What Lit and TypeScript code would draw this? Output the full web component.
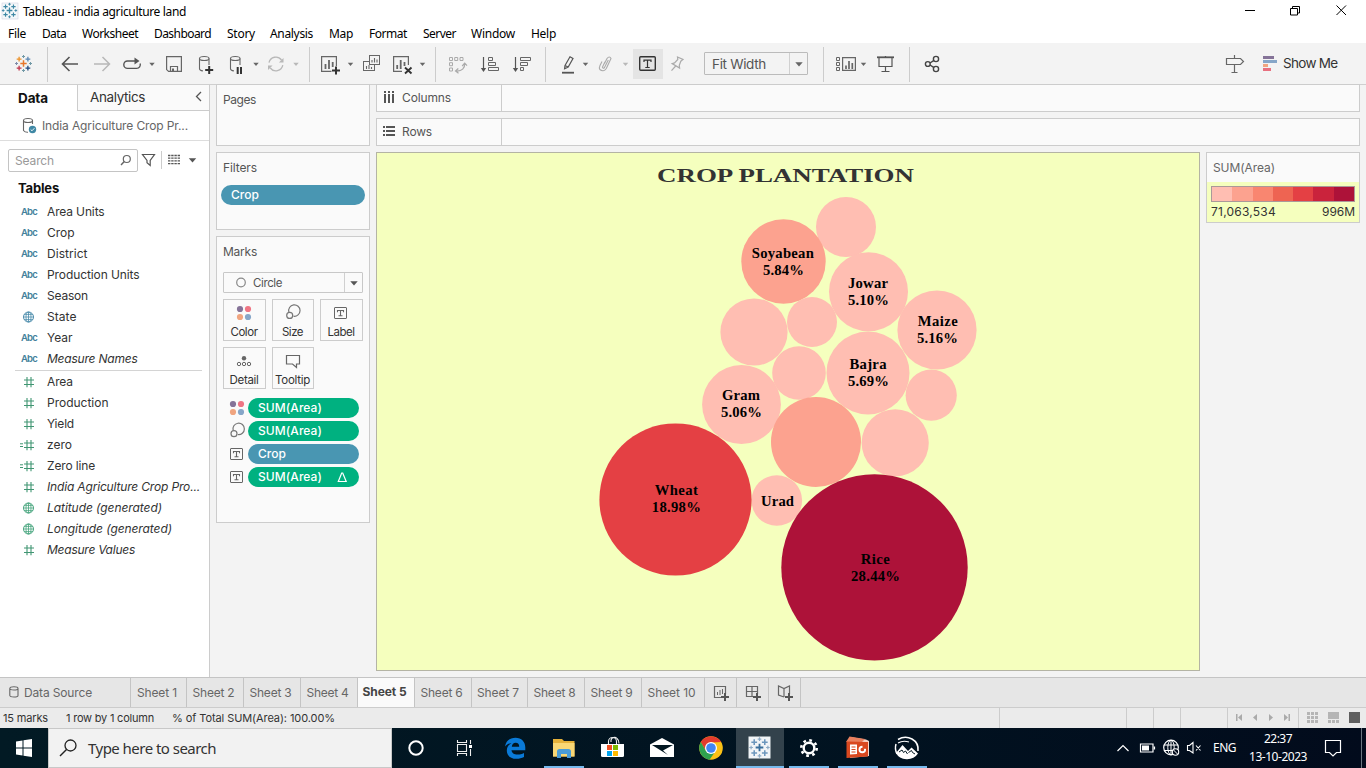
import { LitElement, html, svg, css } from "lit";
import { customElement, property } from "lit/decorators.js";

/** A single line of text tracked to an exact advance width. */
@customElement("fit-text")
class FitText extends LitElement {
  @property({ type: Number }) w = 0;
  @property() text = "";
  static styles = css`
    :host { display: inline-block; white-space: pre; flex: none; }
    .s { display: inline-block; }
  `;
  render() {
    return html`<span class="s">${this.text}</span>`;
  }
  firstUpdated() {
    const s = this.renderRoot.querySelector(".s") as HTMLElement;
    const natural = s.getBoundingClientRect().width;
    s.style.letterSpacing = `${(this.w - natural) / this.text.length}px`;
  }
}

const t = (text: string, w: number, cls = "") =>
  html`<fit-text class=${cls} .text=${text} .w=${w}></fit-text>`;

/** An icon cell: a window of the given size onto the shared drawing space. */
const cell = (x: number, y: number, w: number, h: number, body: unknown, cls = "") =>
  html`<svg class="cell ${cls}" width=${w} height=${h} viewBox="${x} ${y} ${w} ${h}">${body}</svg>`;

const L = (d: string, c = "#666", sw = 1.2) =>
  svg`<path d=${d} fill="none" stroke=${c} stroke-width=${sw} />`;
const F = (d: string, c = "#666") => svg`<path d=${d} fill=${c} />`;
const C = (cx: number, cy: number, r: number, c: string) =>
  svg`<circle cx=${cx} cy=${cy} r=${r} fill=${c} />`;
const O = (cx: number, cy: number, r: number, c = "#666", sw = 1.2, f = "none") =>
  svg`<circle cx=${cx} cy=${cy} r=${r} fill=${f} stroke=${c} stroke-width=${sw} />`;
const plus = (x: number, y: number, r: number, c: string, sw = 1.2) =>
  L(`M${x - r} ${y}H${x + r}M${x} ${y - r}V${y + r}`, c, sw);
const caret = (x: number, y: number, c = "#666", r = 2.7) =>
  F(`M${x - r} ${y - r / 2}H${x + r}L${x} ${y + r * 0.7}Z`, c);

const logo = (x: number, y: number, k: number, p: string[]) => svg`
  ${plus(x, y, 3.2 * k, p[0], 1.5 * k)}
  ${plus(x - 4.4 * k, y - 4.4 * k, 2.4 * k, p[1], 1.3 * k)}
  ${plus(x + 4.4 * k, y - 4.4 * k, 2.4 * k, p[2], 1.3 * k)}
  ${plus(x - 4.4 * k, y + 4.6 * k, 2.4 * k, p[3], 1.3 * k)}
  ${plus(x + 4.4 * k, y + 4.6 * k, 2.4 * k, p[4], 1.3 * k)}
  ${plus(x, y - 7 * k, 1.5 * k, p[5], k)}
  ${plus(x, y + 7 * k, 1.5 * k, p[5], k)}
  ${plus(x - 7 * k, y, 1.5 * k, p[6], k)}
  ${plus(x + 7 * k, y, 1.5 * k, p[5], k)}`;

const cylinder = (x: number, y: number, w: number) =>
  svg`<ellipse cx=${x + w / 2} cy=${y + 2} rx=${w / 2} ry="2" fill="none" stroke="#666" stroke-width="1.1" />`;

const sep = (x: number) => L(`M${x + 0.5} 47V82`, "#ccc", 1);
const T = (x: number, y: number, w: number, h: number) => svg`
  <rect x=${x + 0.5} y=${y + 0.5} width=${w - 1} height=${h - 1} rx=".5" fill="none" stroke="#666" />
  ${L(`M${x + w / 2} ${y + 3}V${y + h - 3}M${x + w / 2 - 2} ${y + h - 3.3}h4M${x + w / 2 - 3} ${y + 5.2}V${y + 3.5}h6v1.7`, "#666", 1.1)}`;
const lasso = (x: number, y: number) => svg`
  ${L(`M${x - 4.6} ${y + 0.2}A5.7 5.700 0 1 1 ${x} ${y + 4.2}`, "#777", 1.2)}${O(x - 3.8, y + 3.4, 3, "#777", 1.2)}`;
const dots = (x: number, y: number) => svg`
  ${C(x - 4, y - 4, 3.1, "#857398")}${C(x + 4, y - 4, 3.1, "#ef7584")}
  ${C(x - 4, y + 4, 3.1, "#f0a580")}${C(x + 4, y + 4, 3.1, "#86a6c8")}`;

const toolbarLeft = [
  cell(0, 43, 47, 41, logo(23.5, 63.5, 1, ["#e8762c", "#eb9129", "#5c87b2", "#c0334a", "#1f457e", "#7199a6", "#7f8ba8"])),
  cell(47, 43, 8, 41, sep(47)),
  cell(55, 43, 65, 41, svg`
    ${L("M62.5 64H78M69.5 57L62.5 64L69.5 71", "#555", 1.6)}
    ${L("M94 64H109M102.5 57L109.5 64L102.5 71", "#b8b8b8", 1.5)}`),
  cell(120, 43, 40, 41, svg`
    ${L("M137 61H127.5a3.7 3.7 0 0 0 0 7.4H136.5a3.7 3.7 0 0 0 3.6-5", "#555", 1.4)}
    ${F("M134.5 57.6L139.5 61L134.5 64.4Z", "#555")}${caret(152, 64)}`),
  cell(160, 43, 30, 41, svg`
    ${L("M166.6 56.6H181.4V71.4H168.6L166.6 69.6Z M170.5 71V66.5H177.5V71", "#666", 1.2)}${F("M172 68.5h2v3h-2z")}`),
  cell(190, 43, 30, 41, svg`${cylinder(199.5, 56.5, 9.5)}
    ${L("M199.5 58.5V68.7c0 1.4 1.6 2 3.4 2.2M209 58.5V65", "#666", 1.1)}${plus(209.2, 70, 4, "#333", 2)}`),
  cell(220, 43, 42, 41, svg`${cylinder(230.5, 56.5, 9.5)}
    ${L("M230.5 58.5V68.7c0 1.4 1.6 2 3.4 2.2M240 58.5V65", "#666", 1.1)}${L("M237.7 67V74M241 67V74", "#333", 2)}${caret(256, 64)}`),
  cell(262, 43, 47, 41, svg`
    ${L("M269 62.6A7 7 0 0 1 281.5 60M282.8 65.2A7 7 0 0 1 270.3 68", "#b8b8b8", 1.3)}
    ${F("M283.5 58v4.6h-4.6zM268 70v-4.6h4.6z", "#b8b8b8")}${caret(296, 64, "#b8b8b8")}`),
  cell(309, 43, 8, 41, sep(309)),
  cell(317, 43, 43, 41, svg`
    ${L("M331.5 71.4H321.6V56.6H336.4V66", "#666", 1.2)}${L("M325.5 69V64M329 69V60M332.7 67V62", "#666", 1.8)}
    ${plus(336, 70.4, 4, "#333", 2)}${caret(350.5, 64)}`),
  cell(360, 43, 27, 41, svg`
    <rect x="363.5" y="61.5" width="11" height="9" fill="#f3f3f3" stroke="#666" />
    <rect x="369.5" y="55.5" width="10" height="9" fill="#f3f3f3" stroke="#666" />
    ${L("M366.5 69V66M369 69V65M371.5 69V67M372 62.5V60M374.5 62.5V58M377 62.5V59.5", "#666", 1.1)}`),
  cell(387, 43, 48, 41, svg`
    ${L("M402 71.4H393.6V56.6H408.4V65", "#666", 1.2)}${L("M397.2 69V65M400.7 69V60M404.5 66V62", "#666", 1.8)}
    ${L("M405 67.5L411.5 73.5M411.5 67.5L405 73.5", "#333", 1.9)}${caret(422.5, 64)}`),
  cell(435, 43, 8, 41, sep(435)),
  cell(443, 43, 30, 41, svg`
    ${L("M449.5 57.5h3v3h-3zM454.7 57.5h3v3h-3zM460 57.5h3v3h-3zM449.5 62.7h3v3h-3zM449.5 68h3v3h-3z", "#aaa", 1)}
    ${L("M456 71C462 71.5 465 68 464.7 63.5M462.2 66L464.7 63.2L467 65.7M458.3 68.5L455.5 71L458.5 73.3", "#aaa", 1.2)}`),
  cell(473, 43, 32, 41, svg`
    ${L("M483.5 57V70", "#555", 1.2)}${F("M480.8 68H486.2L483.5 72Z", "#555")}
    ${L("M488.5 57.5h4v3h-4zM488.5 62.5h7v3h-7zM488.5 67.5h10v3h-10z", "#666", 1)}`),
  cell(505, 43, 40, 41, svg`
    ${L("M515.5 57V70", "#555", 1.2)}${F("M512.8 68H518.2L515.5 72Z", "#555")}
    ${L("M520.5 57.5h10v3h-10zM520.5 62.5h7v3h-7zM520.5 67.5h3v3h-3z", "#666", 1)}`),
  cell(545, 43, 8, 41, sep(545)),
  cell(553, 43, 40, 41, svg`
    ${L("M565 65.5L570 56.8L573 58.5L568.2 67L564.6 68.8ZM565 65.5L568.2 67", "#555", 1.2)}
    ${L("M562 72.7H574", "#555", 1.8)}${caret(585.5, 64)}`),
  cell(593, 43, 39, 41, svg`
    ${L("M604.5 63.5L607 58.5Q609.5 55.5 611 58.5L606.3 68.5Q603.5 72.5 599.8 69.5Q598.8 68 600 65.5L602 61.5M608.3 60L604.5 67.5Q603 69 602.4 67.2L605 61.8", "#aaa", 1.1)}
    ${caret(625.5, 64, "#b8b8b8")}`),
  cell(632, 43, 31, 41, svg`
    <rect x="633" y="49" width="30" height="30" fill="#e4e4e4" />
    <rect x="639.7" y="56.7" width="15.6" height="13.6" rx="1" fill="none" stroke="#333" stroke-width="1.4" />
    ${L("M647.5 60V67.3M645.3 67.5H649.7M644 62V60.2H651V62", "#333", 1.2)}`),
  cell(663, 43, 41, 41, svg`
    ${L("M677.5 57L683 59.5L680.8 61.2L679.3 65.3L679.6 68L672.2 63.6L674.5 62.9L677.8 59.5ZM675.7 66L671.5 70.7", "#aaa", 1.2)}`),
];

const toolbarRight = [
  cell(808, 43, 15, 41, ""),
  cell(823, 43, 8, 41, sep(823)),
  cell(831, 43, 38, 41, svg`
    ${L("M836.5 57.5h3v3h-3zM836.5 62.5h3v3h-3zM836.5 67.5h3v3h-3z", "#666", 1)}
    ${L("M842.6 57.6H855.4V70.4H842.6Z", "#666", 1.2)}${L("M846 69V65.5M849 69V61M852.3 69V63", "#666", 1.7)}${caret(863.5, 64)}`),
  cell(869, 43, 40, 41, svg`
    ${L("M877 57.3H894", "#555", 1.8)}${L("M879 58V66.5H892V58M885.5 56V57M885.5 66.5V71M881.5 71.5H889.5", "#555", 1.2)}`),
  cell(909, 43, 8, 41, sep(909)),
  cell(917, 43, 30, 41, svg`
    ${L("M930 63L934 60.3M930 65L934 67.7", "#444", 1.4)}${O(927.8, 64, 2.4, "#444", 1.4)}${O(936, 59, 2.6, "#444", 1.4)}${O(936, 69, 2.6, "#444", 1.4)}`),
];

const abc = html`<span class="abc">${t("Abc", 16)}</span>`;
const globe = (c: string) => html`<svg class="fi" viewBox="0 0 20 14">
  ${O(9.5, 7, 5, c, 1)}${L("M4.5 7H14.5M9.5 2V12M5.3 4.4H13.7M5.3 9.6H13.7", c, 0.8)}
  <ellipse cx="9.5" cy="7" rx="2.5" ry="5" fill="none" stroke=${c} stroke-width=".8" /></svg>`;
const hash = (calc = false) => html`<svg class="fi" viewBox="0 0 20 14">
  ${L("M5 5H15M5 9.5H15M8 2V12.3M12 2V12.3", "#419673", 1.1)}${calc ? L("M1 5.8H4M1 8.5H4", "#419673", 1) : ""}</svg>`;

type Field = [unknown, string, number, boolean?];
const dims: Field[] = [
  [abc, "Area Units", 57.5], [abc, "Crop", 27.5], [abc, "District", 40.5], [abc, "Production Units", 92.5],
  [abc, "Season", 41], [globe("#4a8bab"), "State", 29.5], [abc, "Year", 25.5], [abc, "Measure Names", 90.5, true],
];
const measures: Field[] = [
  [hash(), "Area", 26], [hash(), "Production", 61.5], [hash(), "Yield", 27], [hash(true), "zero", 25],
  [hash(true), "Zero line", 48], [hash(), "India Agriculture Crop Pro...", 153, true],
  [globe("#46a57d"), "Latitude (generated)", 115, true], [globe("#46a57d"), "Longitude (generated)", 125, true],
  [hash(), "Measure Values", 88, true],
];
const field = ([icon, name, w, it]: Field) =>
  html`<div class="field">${icon}${t(name, w, it ? "it" : "")}</div>`;

const P = "#ffbeb2", S = "#fca28f";
const bubbles: [number, number, number, string][] = [
  [846, 227, 30, P], [783.5, 261.5, 42.2, S], [868.5, 291.7, 39.5, P], [937, 330, 39.6, P],
  [754, 332, 33.6, P], [812, 322, 25, P], [868, 373, 41.5, P], [799, 373, 26.8, P],
  [741.5, 404.5, 39.4, P], [931.2, 395.2, 25.6, P], [816, 442, 45, S], [895.2, 442.8, 33.6, P],
  [776.8, 500.5, 25.3, P], [675.5, 499.5, 76.1, "#e44044"], [874.5, 567.4, 93.2, "#ad1239"],
];
const labels: [string, number, number, number][] = [
  ["Soyabean", 782.8, 258, 62], ["5.84%", 783.5, 274.7, 41], ["Jowar", 868, 288, 40], ["5.10%", 868.5, 305, 41],
  ["Maize", 937.7, 326, 40], ["5.16%", 937.5, 343, 41], ["Bajra", 868, 369, 37], ["5.69%", 868.5, 386, 41],
  ["Gram", 741, 400, 38], ["5.06%", 741.5, 417, 41], ["Wheat", 676.3, 495, 43], ["18.98%", 676.3, 511.7, 49],
  ["Urad", 777.5, 506, 33], ["Rice", 875.3, 564, 29], ["28.44%", 875.5, 581, 49],
];

const sheets: [string, number, number][] = [
  ["Sheet 1", 56, 40], ["Sheet 2", 57, 42], ["Sheet 3", 57, 42], ["Sheet 4", 57, 42], ["Sheet 5", 57, 44],
  ["Sheet 6", 57, 42], ["Sheet 7", 56, 42], ["Sheet 8", 57, 42], ["Sheet 9", 57, 42], ["Sheet 10", 63, 48],
];
const menu: [string, number, number][] = [
  ["File", 18, 16], ["Data", 24, 16], ["Worksheet", 56, 16], ["Dashboard", 57, 16], ["Story", 28, 15], ["Analysis", 43, 16],
  ["Map", 24, 16], ["Format", 38, 16], ["Server", 33, 15], ["Window", 44, 16], ["Help", 25, 0],
];

const taskIcons = [
  cell(392, 728, 48, 40, O(416, 748, 6.7, "#fff", 2)),
  cell(440, 728, 51, 40, svg`
    ${L("M457.5 744.5h9v7h-9zM457.5 740v2.5h9V740M457.5 756v-2.5h9V756M470.5 740v4M470.5 749v7", "#eee", 1.1)}${F("M469 745h3v3h-3z", "#fff")}`),
  cell(491, 728, 49, 40, svg`<path fill="#0a7ad8" d="M505 746.500C506 740.500 510 737.800 515.500 737.800C521.500 737.800 525.300 742 525.300 747.500V750.300H511.500C511.700 753 514.200 754.600 517.500 754.600C520 754.600 522 754 524 753V757C521.800 758.200 519.200 758.800 516.500 758.800C510.500 758.800 506.800 755.500 506.800 750.500C506.800 747 508.800 744.500 511.500 743C508.900 743.300 506.500 744.600 505 746.500ZM511.800 746.700H519.200C519.200 744.200 518 742.700 515.700 742.700C513.500 742.700 512.100 744.200 511.800 746.700Z" />`),
  cell(540, 728, 48, 40, svg`
    ${F("M553 739h9l2 2h10.5v15.5H553z", "#e5b13a")}${F("M553 743h21.5v13.5H553z", "#f9d775")}
    ${F("M557 758v-6.5q0-2.500 2.500-2.500h9q2.500 0 2.500 2.500v6.500h-4v-4h-6v4z", "#4a9cd6")}${F("M544 766h40v2h-40z", "#76b9ed")}`),
  cell(588, 728, 48, 40, svg`
    ${L("M608.5 744v-2.500a4 4 0 0 1 8 0V744M611 742v-2a3.500 3.500 0 0 1 6-1.500q2 1.500 2 5", "#eee", 1.1)}
    ${F("M601 744h23v11.500q0 1.500-1.500 1.500h-20q-1.500 0-1.500-1.500z", "#fff")}
    ${F("M607 745h5v5h-5z", "#f25022")}${F("M613 745h5v5h-5z", "#7fba00")}${F("M607 751h5v5h-5z", "#00a4ef")}${F("M613 751h5v5h-5z", "#ffb900")}`),
  cell(636, 728, 50, 40, svg`
    ${F("M650 744.5L662 738L674 744.5V757H650z", "#fff")}${F("M652 745H673L663 750.5L668 755Z", "#021722")}`),
  cell(686, 728, 50, 40, svg`
    ${C(711, 748, 11.8, "#fbc116")}
    ${F("M700.8 742.1A11.8 11.8 0 0 1 721.2 742.1L711 742.5L706 751Z", "#e33b2e")}
    ${F("M700.8 742.1A11.8 11.8 0 0 0 709.5 759.7L716 750.5L706 751Z", "#2fa14f")}
    ${C(711, 748, 6, "#fff")}${C(711, 748, 4.8, "#4285f4")}`),
  cell(736, 728, 48, 40, svg`
    ${F("M736 728h48v40h-48z", "#33424c")}${F("M748.500 736.500h22v22h-22z", "#f1f4f7")}
    ${logo(759.5, 747.5, 1.2, ["#3a6f9c", "#6d97bd", "#6d97bd", "#6d97bd", "#6d97bd", "#8dabc6", "#8dabc6"])}${F("M736 766h48v2h-48z", "#76b9ed")}`),
  cell(784, 728, 49, 40, svg`
    ${O(809, 748, 5.3, "#fff", 2.4)}
    <circle cx="809" cy="748" r="7.700" fill="none" stroke="#fff" stroke-width="2.600" stroke-dasharray="2.700 3.350" />
    ${F("M789 766h40v2h-40z", "#76b9ed")}`),
  cell(833, 728, 49, 40, svg`
    ${F("M850 737L866 739.5L869 741V756L850 758z", "#f7d3c6")}${F("M846 742L849.5 736.5L865 739L862 742z", "#e8805f")}
    ${F("M846.500 741.5L868 742V756.500L846.500 758z", "#d9481f")}${F("M850 744.5H857V754L850 754.5z", "#fff")}${L("M851.5 747h4M851.5 749.500h4M851.5 752h4", "#d9481f", 1.1)}
    ${O(862.3, 749.5, 2.8, "#fff", 1.9)}${F("M862.500 745h5v3.800h-5z", "#d9481f")}${F("M838 766h40v2h-40z", "#76b9ed")}`),
  cell(882, 728, 60, 40, svg`
    ${L("M898 739.5Q905 735.500 912 739Q919 743 918 751M896 744Q894.500 749 897 754", "#fff", 1.5)}
    ${F("M896 753L902.500 745L908 751L911.500 747.500L918 753.500Q914 759.500 906.500 759.200Q899 759 896 753Z", "#fff")}
    ${L("M899 752l3-2 1.500 2.500 2-1.500 2 3M908.500 752.500l3-2 1 2 2.500 1.500", "#021722", 1)}
    ${L("M898 743Q903 740 909 742", "#fff", 1.100)}
    ${F("M887 766h40v2h-40z", "#76b9ed")}`),
];

@customElement("app-root")
class AppRoot extends LitElement {
  static styles = css`
    :host { display: flex; flex-direction: column; width: 1366px; height: 768px; overflow: hidden; background: #f3f3f3;
      font-family: Inter, "Open Sans", sans-serif; font-size: 12px; line-height: 16px; color: #333; }
    * { box-sizing: border-box; }
    svg { display: block; flex: none; }
    .win { font-family: "Noto Sans", sans-serif; color: #000; }
    .title { height: 24px; background: #fff; display: flex; align-items: center; flex: none; }
    .grow { flex: 1; }
    .menu { height: 19px; background: #fff; display: flex; align-items: center; flex: none; padding: 1px 0 0 8px; }
    .toolbar { height: 41px; display: flex; flex: none; }
    .fit { width: 104px; height: 23px; margin-top: 9px; border: 1px solid #bbb; display: flex; align-items: center; font-size: 13.5px; color: #555; padding-left: 7px; border-radius: 1px; flex: none; }
    .arrow { width: 18px; align-self: stretch; border-left: 1px solid #d0d0d0; margin-left: auto; display: flex; align-items: center; justify-content: center; }
    .showme { font-size: 13.5px; padding-top: 12px; width: 83px; }
    .main { height: 593px; display: flex; flex: none; border-top: 1px solid #cfcfcf; }
    .data { width: 210px; background: #fff; border-right: 1px solid #ccc; flex: none; display: flex; flex-direction: column; }
    .tabs2 { height: 26px; display: flex; flex: none; font-size: 13.5px; }
    .tdata { width: 77px; padding: 5px 0 0 18px; font-weight: 700; color: #111; }
    .tana { flex: 1; border-left: 1px solid #ccc; border-bottom: 1px solid #ccc; background: #fafafa; padding: 4px 0 0 12px; display: flex; }
    .source { height: 30px; border-bottom: 1px solid #ddd; display: flex; align-items: center; color: #666; flex: none; }
    .search { display: flex; padding: 8px 0 0 8px; height: 32px; flex: none; }
    .box { width: 130px; height: 23px; border: 1px solid #c4c4c4; border-radius: 2px; display: flex; align-items: center; padding-left: 6px; color: #999; }
    .tables { height: 28px; padding: 7px 0 0 18px; font-size: 13px; font-weight: 700; color: #111; flex: none; }
    .field { height: 21px; display: flex; align-items: center; padding-left: 19px; flex: none; }
    .abc { width: 28px; padding-left: 2px; font-size: 9.5px; font-weight: 600; color: #43809b; margin-top: 1px; }
    .fi { width: 20px; height: 14px; margin-right: 8px; }
    .it { font-style: italic; }
    .rule { height: 1px; background: #d4d4d4; margin: 1px 7px 0 15px; flex: none; }
    .cards { width: 154px; margin: -1px 6px 0 6px; display: flex; flex-direction: column; gap: 6px; flex: none; color: #555; }
    .card { border: 1px solid #ccc; background: #fafafa; padding: 7px 0 0 6px; flex: none; }
    .pages { height: 62px; } .filters { height: 78px; } .marks { height: 287px; }
    .pill { height: 20px; border-radius: 10px; background: #4996b2; color: #fff; display: flex; align-items: center; padding-left: 10px; font-weight: 500; }
    .filters .pill { width: 144px; margin: 9px 0 0 -2px; }
    .green { background: #00b180; }
    .drop { width: 140px; height: 21px; margin-top: 12px; border: 1px solid #c8c8c8; border-radius: 1px; display: flex; align-items: center; font-size: 11.5px; }
    .btns { display: grid; grid-template-columns: 43px 42px 43px; gap: 6px; margin-top: 6px; color: #333; }
    .btn { height: 42px; border: 1px solid #ccc; display: flex; flex-direction: column; align-items: center; font-size: 11.5px; }
    .btn fit-text { margin-left: -1px; }
    .pills { display: flex; flex-direction: column; gap: 3px; margin-top: 9px; }
    .prow { display: flex; } .prow .pill { width: 111px; }
    .sheet { flex: 1; margin-top: -1px; display: flex; flex-direction: column; gap: 6px; color: #555; }
    .shelf { width: 984px; height: 28px; border: 1px solid #ccc; background: #fafafa; display: flex; align-items: center; flex: none; }
    .name { width: 125px; align-self: stretch; border-right: 1px solid #ccc; display: flex; align-items: center; }
    .row { display: flex; gap: 6px; align-items: flex-start; }
    .view { width: 824px; height: 519px; border: 1px solid #b4b4a4; background: #f5ffbe; }
    .legend { width: 154px; height: 71px; border: 1px solid #ccc; background: #fafafa; display: flex; flex-direction: column; }
    .lt { height: 29px; padding: 7px 0 0 6px; color: #666; }
    .lb { flex: 1; background: #f5ffbe; padding: 4px 4px 0; color: #333; }
    .ramp { height: 16px; border: 1px solid #a99; display: flex; margin-bottom: 2px; }
    .ramp i { flex: 1; }
    .nums { display: flex; justify-content: space-between; }
    .lbl { font: bold 14.67px "Liberation Serif", serif; fill: #000; text-anchor: middle; }
    .head { font: bold 19.5px "Liberation Serif", serif; fill: #333; }
    .bottom { height: 31px; border-top: 1px solid #c4c4c4; border-bottom: 1px solid #ccc; background: #e6e6e6; display: flex; flex: none; color: #666; }
    .st { border-right: 1px solid #c4c4c4; display: flex; align-items: center; justify-content: center; flex: none; }
    .tab { padding-right: 3px; }
    .ds { width: 131px; justify-content: flex-start; }
    .on { background: #fafafa; color: #444; font-weight: 700; padding-bottom: 1px; }
    .status { height: 20px; background: #ebebeb; display: flex; align-items: center; flex: none; font-size: 11px; padding-left: 3px; gap: 18px; }
    .taskbar { height: 40px; display: flex; flex: none; background: linear-gradient(90deg, #021a24, #011220 65%, #020b1c); }
    .find { width: 344px; height: 40px; background: #f2f2f2; border: 1px solid #c8c8c8; display: flex; align-items: center; font-size: 15px; color: #333; }
    .tray { color: #fff; display: flex; align-items: center; font-size: 12px; }
    .clock { display: flex; flex-direction: column; align-items: center; width: 58px; line-height: 18px; margin: 0 8px 0 13px; }
  `;

  render() {
    return html`
      <div class="title win">
        ${cell(0, 0, 23, 24, svg`<rect x="2" y="3" width="16" height="16" fill="#f4f8fa" stroke="#ccd" stroke-width=".5" />${logo(9.5, 10.5, 0.9, Array(7).fill("#3f88a5"))}`)}
        ${t("Tableau - india agriculture land", 163)}<span class="grow"></span>
        ${cell(1236, 0, 130, 24, svg`${L("M1245 10.5H1255", "#000", 1)}
          ${L("M1290.5 8.5h7v6.5h-7zM1292.5 8.500V6.500h7v6.500h-2M1336.500 5.500L1346 15M1346 5.500L1336.500 15", "#000", 1)}`)}
      </div>
      <div class="menu win">${menu.map(([m, w, g]) => html`${t(m, w)}${cell(0, 0, g, 1, "")}`)}</div>
      <div class="toolbar">
        ${toolbarLeft}
        <div class="fit">${t("Fit Width", 54)}<span class="arrow">${cell(0, 0, 10, 8, caret(5, 4, "#666", 3.7))}</span></div>
        ${toolbarRight}<span class="grow"></span>
        ${cell(1217, 43, 66, 41, svg`
          ${L("M1226.5 58.500H1240.500L1243.500 61.500L1240.500 64.500H1226.500ZM1234.500 55V58M1234.500 65V72M1231.500 72.500H1237.500", "#666", 1.2)}
          ${F("M1263 56h11v3h-11z", "#857398")}${F("M1263 60h14v3h-14z", "#86a6c8")}${F("M1263 64h5v3h-5z", "#f0a580")}${F("M1263 68h8v3h-8z", "#e8707f")}`)}
        <div class="showme">${t("Show Me", 54.5)}</div>
      </div>
      <div class="main">
        <div class="data">
          <div class="tabs2">
            <div class="tdata">${t("Data", 30)}</div>
            <div class="tana">${t("Analytics", 55)}${cell(145, 89, 64, 16, L("M201 92L196.500 96.500L201 101", "#555", 1.3))}</div>
          </div>
          <div class="source">
            ${cell(0, 111, 42, 30, svg`${cylinder(23.5, 118.5, 9)}${L("M23.5 120.5V130.5Q25 132.500 28 132.300M32.500 120.500V124", "#666", 1.1)}
              ${C(32.5, 129.5, 3.7, "#3f88a5")}${L("M30.700 129.500l1.300 1.300 2.400-2.600", "#fff", 0.9)}`)}
            ${t("India Agriculture Crop Pr...", 146)}
          </div>
          <div class="search">
            <div class="box">${t("Search", 39)}${cell(54, 150, 82, 21, svg`${O(126.8, 159, 3.5)}${L("M124.300 161.500L121 165", "#666", 1.4)}`)}</div>
            ${cell(138, 149, 65, 23, svg`
              ${L("M142.500 154.500H154.500L150.200 160.500V165.500L147 162.800V160.500Z", "#555", 1.2)}${L("M161.500 151V169", "#ccc", 1)}
              <path d="M168 155.500H180M168 158.200H180M168 160.900H180M168 163.600H180" stroke="#555" stroke-width="1.300" stroke-dasharray="2.400 .8" />
              ${caret(192.5, 160, "#555", 3.7)}`)}
          </div>
          <div class="tables">${t("Tables", 41)}</div>
          ${dims.map(field)}
          <div class="rule"></div>
          ${measures.map(field)}
        </div>
        <div class="cards">
          <div class="card pages">${t("Pages", 33)}</div>
          <div class="card filters">${t("Filters", 34)}<div class="pill">${t("Crop", 28)}</div></div>
          <div class="card marks">${t("Marks", 34)}
            <div class="drop">${cell(224, 273, 29, 19, O(241, 282.5, 4.3, "#888", 1.2))}${t("Circle", 29)}
              <span class="arrow">${cell(0, 0, 10, 8, caret(5, 4, "#555", 3.7))}</span></div>
            <div class="btns">
              <div class="btn">${cell(224, 300, 41, 24, dots(244, 313))}${t("Color", 27)}</div>
              <div class="btn">${cell(273, 300, 40, 24, lasso(293.5, 312))}${t("Size", 21)}</div>
              <div class="btn">${cell(321, 300, 41, 24, T(334, 307, 13, 12))}${t("Label", 27)}</div>
              <div class="btn">${cell(224, 348, 41, 24, svg`${C(244, 358.3, 2.2, "#666")}${O(239, 364, 1.7, "#666", 1)}${O(244, 364, 1.7, "#666", 1)}${O(249, 364, 1.7, "#666", 1)}`)}${t("Detail", 29)}</div>
              <div class="btn">${cell(273, 348, 40, 24, L("M286.500 355.500H299.500V364H296.500V367.500L292.500 364H286.500Z", "#666", 1.2))}${t("Tooltip", 35)}</div>
            </div>
            <div class="pills">
              <div class="prow">${cell(223, 398, 25, 20, dots(237, 408))}<div class="pill green">${t("SUM(Area)", 64)}</div></div>
              <div class="prow">${cell(223, 421, 25, 20, lasso(237.8, 430.3))}<div class="pill green">${t("SUM(Area)", 64)}</div></div>
              <div class="prow">${cell(223, 444, 25, 20, T(230, 448, 13, 12))}<div class="pill">${t("Crop", 28)}</div></div>
              <div class="prow">${cell(223, 467, 25, 20, T(230, 471, 13, 12))}<div class="pill green">${t("SUM(Area)", 64)}${cell(322, 467, 37, 20, L("M338.300 481.500L341.700 473H342.700L346.200 481.500Z", "#fff", 1.2))}</div></div>
            </div>
          </div>
        </div>
        <div class="sheet">
          <div class="shelf"><div class="name">${cell(377, 85, 25, 26, F("M384 91h2v2h-2zM388 91h2v2h-2zM392 91h2v2h-2zM384 94h2v9h-2zM388 94h2v9h-2zM392 94h2v9h-2z", "#555"))}${t("Columns", 49)}</div></div>
          <div class="shelf"><div class="name">${cell(377, 119, 25, 26, F("M383 126h2v2h-2zM383 130h2v2h-2zM383 134h2v2h-2zM386 126h9v2h-9zM386 130h9v2h-9zM386 134h9v2h-9z", "#555"))}${t("Rows", 30)}</div></div>
          <div class="row">
            <div class="view">
              <svg width="822" height="517" viewBox="377 153 822 517">
                <text class="head" x="657" y="182.300" textLength="257" lengthAdjust="spacingAndGlyphs">CROP PLANTATION</text>
                ${bubbles.map(([x, y, r, c]) => C(x, y, r, c))}
                ${labels.map(([s, x, y, w]) => svg`<text class="lbl" x=${x} y=${y} textLength=${w}>${s}</text>`)}
              </svg>
            </div>
            <div class="legend">
              <div class="lt">${t("SUM(Area)", 62)}</div>
              <div class="lb">
                <div class="ramp">${["#ffbeb2", "#fca28f", "#f98670", "#ee6452", "#e44044", "#ca233c", "#ad1239"].map((c) => html`<i style="background:${c}"></i>`)}</div>
                <div class="nums">${t("71,063,534", 65)}${t("996M", 33)}</div>
              </div>
            </div>
          </div>
        </div>
      </div>
      <div class="bottom">
        <div class="st ds">${cell(0, 678, 24, 29, L("M9.800 688.500V695.500Q10 697 14 697T18 695.500V688.500Q18 686.800 14 686.800T9.800 688.500Q10 690 14 690T18 688.500", "#666", 1.1))}${t("Data Source", 68)}</div>
        ${sheets.map(([s, w, tw], i) => html`<div class="st tab ${i === 4 ? "on" : ""}" style="width:${w}px">${t(s, tw)}</div>`)}
        <div class="st">${cell(705, 678, 31, 29, svg`${L("M722 697.500H714.500V686.500H725.500V694", "#666", 1.2)}${L("M717.500 695V692M720 695V690M722.500 694V689", "#666", 1)}${plus(725, 697, 4, "#555", 2)}`)}</div>
        <div class="st">${cell(737, 678, 31, 29, svg`${L("M754 696.500H746.500V686.500H757.500V694M752 686.500V696.500M746.500 691.500H757.500", "#666", 1.2)}${plus(757, 697, 4, "#555", 2)}`)}</div>
        <div class="st">${cell(769, 678, 31, 29, svg`${L("M784 697L778.500 695V686L784 688.500L789.500 686V694M784 688.500V697", "#666", 1.2)}${plus(789, 697, 4, "#555", 2)}`)}</div>
      </div>
      <div class="status">${t("15 marks", 45)}${t("1 row by 1 column", 88)}${t("% of Total SUM(Area): 100.00%", 163)}<span class="grow"></span>
        ${cell(995, 708, 371, 20, svg`
          ${L("M999.500 708V728M1126.500 708V728M1153.500 708V728M1180.500 708V728M1227.500 708V728M1298.500 708V728", "#ccc", 1)}
          ${F("M1236 714h1.500v7h-1.500zM1242 714v7l-4-3.500zM1257 714v7l-4-3.500zM1269 714v7l4-3.500zM1284 714v7l4-3.500zM1288.500 714h1.500v7h-1.500z", "#aaa")}
          ${[0, 1, 2].map((a) => [0, 1, 2].map((b) => F(`M${1307 + a * 4} ${712 + b * 4}h3v3h-3z`, "#b5b5b5")))}
          ${F("M1328 712h11v7h-11zM1328 720h3v3h-3zM1332 720h3v3h-3zM1336 720h3v3h-3z", "#b5b5b5")}${F("M1349 712h11v11h-11z", "#5f5f5f")}`)}
      </div>
      <div class="taskbar win">
        ${cell(0, 728, 48, 40, F("M16 741.500L22.500 740.500V747.500H16zM23.500 740.300L32 739V747.500H23.500zM16 748.500H22.500V755.500L16 754.500zM23.500 748.500H32V757L23.500 755.700z", "#fff"))}
        <div class="find">${cell(49, 729, 39, 38, svg`${O(70.5, 745.5, 5.5, "#222", 1.3)}${L("M66.500 749.500L60 756", "#222", 1.4)}`)}${t("Type here to search", 128)}</div>
        ${taskIcons}<span class="grow"></span>
        <div class="tray">
          ${cell(1110, 728, 103, 40, svg`
            ${L("M1117.500 751L1123 745.500L1128.500 751", "#fff", 1.2)}
            ${L("M1140.500 744h12.500v8h-12.500zM1154.500 746.500v3", "#fff", 1.2)}${F("M1142 745.500h7v5h-7z", "#fff")}
            ${O(1171, 747.5, 7.3, "#fff", 1.2)}<ellipse cx="1171" cy="747.500" rx="3.200" ry="7.300" fill="none" stroke="#fff" />
            ${L("M1164 745H1178M1164 750.500H1178M1171 740V755", "#fff", 1)}${O(1175.5, 752, 3.2, "#fff", 1.1, "#020b1c")}${L("M1173.500 750l4 4", "#fff", 1)}
            ${L("M1187.500 745.500H1189.500L1193 742.500V753L1189.500 750.500H1187.500ZM1196 745.500L1200.500 750.500M1200.500 745.500L1196 750.500", "#fff", 1.1)}`)}
          ${t("ENG", 23)}
          <div class="clock">${t("22:37", 28)}${t("13-10-2023", 58)}</div>
          ${cell(1315, 728, 51, 40, svg`${L("M1325.500 740.500H1340.500V752.500H1336.500L1333 756L1329.500 752.500H1325.500Z", "#fff", 1.2)}${L("M1361.500 728V768", "#6a7680", 1)}`)}
        </div>
      </div>`;
  }
}
